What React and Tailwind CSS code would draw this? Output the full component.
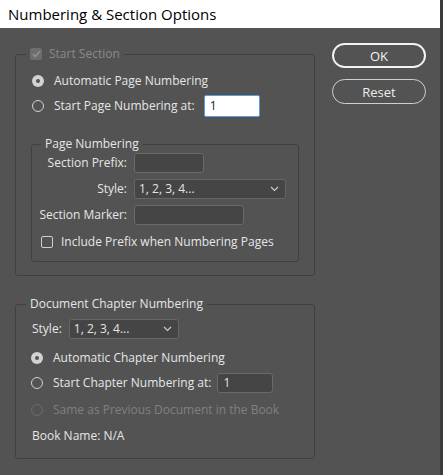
import { useState } from 'react';

const font = { fontFamily: '"Open Sans", "Noto Sans", sans-serif' };

const Chevron = () => (
  <svg width="9" height="6" viewBox="0 0 9 6" className="shrink-0">
    <path d="M1 1l3.5 3.5L8 1" fill="none" stroke="#cfcfcf" strokeWidth="1.1" />
  </svg>
);

const Radio = ({ checked, disabled, onClick }) => (
  <span
    onClick={onClick}
    className={`w-[12px] h-[12px] rounded-full shrink-0 flex items-center justify-center ${
      checked ? 'bg-[#d2d2d2]' : disabled ? 'border border-[#6c6c6c]' : 'border-[1.5px] border-[#d2d2d2]'
    }`}
  >
    {checked && <span className="w-[4px] h-[4px] rounded-full bg-[#535353]" />}
  </span>
);

const Select = ({ width, value }) => (
  <div className={`${width} h-[20px] rounded-[3px] bg-[#454545] border border-[#666] flex items-center justify-between pl-[4px] pr-[6px] text-[#e4e4e4]`}>
    <span>{value}</span>
    <Chevron />
  </div>
);

const Field = ({ width }) => (
  <div className={`${width} h-[20px] rounded-[3px] bg-[#454545] border border-[#6a6a6a]`} />
);

export default function App() {
  const [pageMode, setPageMode] = useState('auto');
  const [chapMode, setChapMode] = useState('auto');

  return (
    <div className="w-[443px] h-[475px] bg-[#3a3a3a] flex text-[12px] leading-[16px]" style={font}>
      <div className="w-[440px] h-full flex flex-col">
        {/* Title bar */}
        <div className="h-[28px] bg-white flex items-center pl-[8px] text-[15px] text-black shrink-0">
          Numbering &amp; Section Options
        </div>

        {/* Body */}
        <div className="flex-1 bg-[#535353] flex pl-[15px] text-[#e6e6e6]">
          <div className="w-[300px] flex flex-col">
            {/* Start Section */}
            <fieldset className="mt-[18px] border border-[#404040] rounded-[3px] px-0">
              <legend className="ml-[10px] px-[4px] flex items-center gap-[7px] text-[#8a8a8a]">
                <span className="w-[12px] h-[12px] rounded-[2px] bg-[#6d6d6d] flex items-center justify-center">
                  <svg width="9" height="8" viewBox="0 0 9 8">
                    <path d="M1 4l2.3 2.4L8 1" fill="none" stroke="#8e8e8e" strokeWidth="1.8" />
                  </svg>
                </span>
                Start Section
              </legend>
              <div className="flex flex-col px-[15px] pt-[8px] pb-[13px]">
                <div className="h-[22px] flex items-center gap-[10px] pl-[1px]" onClick={() => setPageMode('auto')}>
                  <Radio checked={pageMode === 'auto'} />
                  <span>Automatic Page Numbering</span>
                </div>
                <div className="mt-[3px] h-[22px] flex items-center pl-[1px]" onClick={() => setPageMode('start')}>
                  <Radio checked={pageMode === 'start'} />
                  <span className="ml-[10px]">Start Page Numbering at:</span>
                  <div className="ml-[9px] w-[56px] h-[22px] bg-white border-[1.5px] border-[#5a9fe6] rounded-[2px] flex items-center pl-[5px] text-[#1a1a1a]">
                    1
                  </div>
                </div>

                {/* Page Numbering */}
                <fieldset className="mt-[19px] border border-[#404040] rounded-[3px] px-0">
                  <legend className="ml-[9px] px-[4px]">Page Numbering</legend>
                  <div className="flex flex-col pt-[1px] pb-[10px]">
                    <div className="flex items-center">
                      <span className="w-[95px] text-right">Section Prefix:</span>
                      <div className="ml-[7px]"><Field width="w-[70px]" /></div>
                    </div>
                    <div className="mt-[6px] flex items-center">
                      <span className="w-[95px] text-right">Style:</span>
                      <div className="ml-[7px]"><Select width="w-[152px]" value="1, 2, 3, 4..." /></div>
                    </div>
                    <div className="mt-[6px] flex items-center">
                      <span className="w-[95px] text-right">Section Marker:</span>
                      <div className="ml-[7px]"><Field width="w-[110px]" /></div>
                    </div>
                    <div className="mt-[8px] h-[18px] flex items-center gap-[8px] pl-[9px]">
                      <span className="w-[12px] h-[12px] rounded-[2px] border border-[#cfcfcf]" />
                      <span>Include Prefix when Numbering Pages</span>
                    </div>
                  </div>
                </fieldset>
              </div>
            </fieldset>

            {/* Document Chapter Numbering */}
            <fieldset className="mt-[20px] border border-[#404040] rounded-[3px] px-0">
              <legend className="ml-[10px] px-[4px]">Document Chapter Numbering</legend>
              <div className="flex flex-col pl-[16px] pt-[7px] pb-[12px]">
                <div className="flex items-center">
                  <span>Style:</span>
                  <div className="ml-[7px]"><Select width="w-[110px]" value="1, 2, 3, 4..." /></div>
                </div>
                <div className="mt-[9px] h-[20px] flex items-center gap-[10px] -ml-[1px]" onClick={() => setChapMode('auto')}>
                  <Radio checked={chapMode === 'auto'} />
                  <span>Automatic Chapter Numbering</span>
                </div>
                <div className="mt-[5px] h-[20px] flex items-center -ml-[1px]" onClick={() => setChapMode('start')}>
                  <Radio checked={chapMode === 'start'} />
                  <span className="ml-[10px]">Start Chapter Numbering at:</span>
                  <div className="ml-[6px] w-[56px] h-[20px] rounded-[3px] bg-[#454545] border border-[#6a6a6a] flex items-center pl-[5px] text-[#e4e4e4]">
                    1
                  </div>
                </div>
                <div className="mt-[7px] h-[20px] flex items-center gap-[10px] -ml-[1px] text-[#808080]">
                  <Radio disabled />
                  <span>Same as Previous Document in the Book</span>
                </div>
                <div className="mt-[6px] h-[20px] flex items-center">Book Name: N/A</div>
              </div>
            </fieldset>
          </div>

          {/* Buttons */}
          <div className="ml-[17px] pt-[15px] flex flex-col gap-[11px]">
            <button className="w-[94px] h-[25px] rounded-full border-2 border-[#f2f2f2] text-[#f2f2f2] text-[13px]">OK</button>
            <button className="w-[94px] h-[25px] rounded-full border border-[#cfcfcf] text-[#ececec] text-[13px]">Reset</button>
          </div>
        </div>
      </div>
    </div>
  );
}
